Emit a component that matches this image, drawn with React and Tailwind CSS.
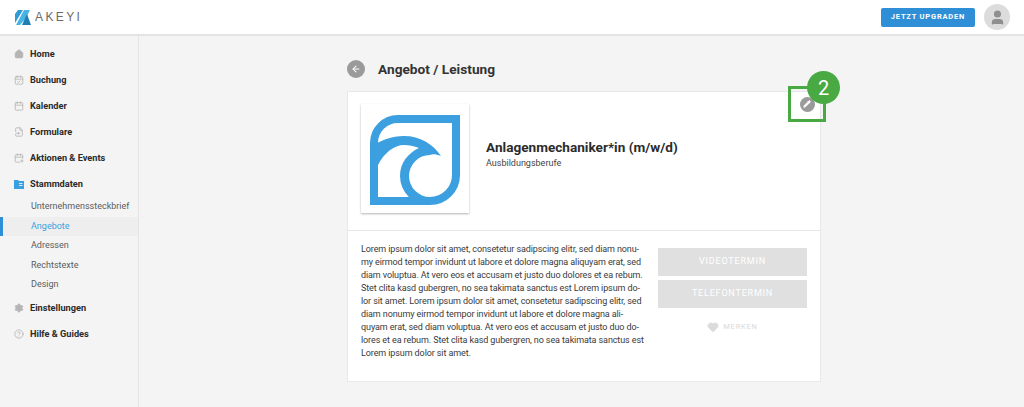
import { ArrowLeft, Pencil, Heart, Home, CalendarCheck, Calendar, FileSymlink, CalendarPlus, Settings, CircleHelp, User } from 'lucide-react';

const NAV_TOP = [
  { label: 'Home', icon: Home, filled: true },
  { label: 'Buchung', icon: CalendarCheck },
  { label: 'Kalender', icon: Calendar },
  { label: 'Formulare', icon: FileSymlink },
  { label: 'Aktionen & Events', icon: CalendarPlus },
];

const SUB_NAV = ['Unternehmenssteckbrief', 'Angebote', 'Adressen', 'Rechtstexte', 'Design'];

const LOREM = [
  'Lorem ipsum dolor sit amet, consetetur sadipscing elitr, sed diam nonu-',
  'my eirmod tempor invidunt ut labore et dolore magna aliquyam erat, sed',
  'diam voluptua. At vero eos et accusam et justo duo dolores et ea rebum.',
  'Stet clita kasd gubergren, no sea takimata sanctus est Lorem ipsum do-',
  'lor sit amet. Lorem ipsum dolor sit amet, consetetur sadipscing elitr, sed',
  'diam nonumy eirmod tempor invidunt ut labore et dolore magna ali-',
  'quyam erat, sed diam voluptua. At vero eos et accusam et justo duo do-',
  'lores et ea rebum. Stet clita kasd gubergren, no sea takimata sanctus est',
  'Lorem ipsum dolor sit amet.',
];

function NavItem({ label, icon: Icon, filled }) {
  return (
    <div className="flex items-center h-[26px] pl-[14px]">
      <Icon className={filled ? 'w-[10px] h-[10px] text-[#b5b5b5] fill-[#b5b5b5]' : 'w-[10px] h-[10px] text-[#b5b5b5]'} strokeWidth={2} />
      <span className="ml-[6px] text-[9.2px] font-bold text-[#2b2b2b]">{label}</span>
    </div>
  );
}

function FolderIcon() {
  return (
    <svg viewBox="0 0 10 9" className="w-[10px] h-[9px]">
      <path d="M0 0h4l1 1h5v8H0z" fill="#3b9fe0" />
      <path d="M5 3h3.5v1H5zM5 5h3.5v1H5z" fill="#d8ecfa" />
    </svg>
  );
}

function WaveLogo() {
  return (
    <svg viewBox="0 0 90 90" className="w-[90px] h-[90px]">
      <path d="M4 86V28A24 24 0 0 1 28 4H86V60A26 26 0 0 1 60 86Z" fill="none" stroke="#3b9fe0" strokeWidth="8" />
      <path
        d="M0 33C10 25 22 21 34 21C50 21 63 29 71 41C66 39 62 39 60 40A21 21 0 0 0 60 82L60 86L42 86L38 81A30 30 0 0 1 30 61C30 48 38 38 49 33C44 31 39 30 34 30C24 30 14 38 8 50L0 50Z"
        fill="#3b9fe0"
      />
    </svg>
  );
}

function AkeyiLogo() {
  return (
    <svg viewBox="0 0 16 15" className="w-[16px] h-[15px]">
      <path d="M3 0h5L0 13V4z" fill="#2f9bd6" />
      <path d="M9 0h6l-4 8-6 7H1z" fill="#49b3e3" />
      <path d="M12 4l4 11h-9z" fill="#1f7fb5" />
    </svg>
  );
}

export default function App() {
  return (
    <div className="h-[407px] flex flex-col overflow-hidden bg-[#f4f4f4] text-[#2b2b2b] font-['Roboto',sans-serif]">
      {/* Header */}
      <header className="h-[36px] shrink-0 bg-white border-b-2 border-[#e3e3e3] flex items-center justify-between pl-[15px] pr-[14px]">
        <div className="flex items-center gap-[4px]">
          <AkeyiLogo />
          <span className="text-[12px] tracking-[2.4px] text-[#6b6b6b] font-['Liberation_Sans',sans-serif]">AKEYI</span>
        </div>
        <div className="flex items-center gap-[9px]">
          <div className="w-[94px] h-[19px] bg-[#2f8fd6] rounded-[2px] flex items-center justify-center text-[7.5px] font-bold tracking-[0.8px] text-white">
            JETZT UPGRADEN
          </div>
          <div className="w-[26px] h-[26px] rounded-full bg-[#dcdcdc] flex items-center justify-center">
            <User className="w-[17px] h-[17px] text-[#8f8f8f] fill-[#8f8f8f]" />
          </div>
        </div>
      </header>

      <div className="flex flex-1">
        {/* Sidebar */}
        <aside className="w-[139px] shrink-0 border-r border-[#e5e5e5] pt-[5px]">
          {NAV_TOP.map((item) => (
            <NavItem key={item.label} label={item.label} icon={item.icon} filled={item.filled} />
          ))}
          <div className="flex items-center h-[26px] pl-[14px]">
            <FolderIcon />
            <span className="ml-[6px] text-[9.2px] font-bold">Stammdaten</span>
          </div>
          <div>
            {SUB_NAV.map((label) =>
              label === 'Angebote' ? (
                <div key={label} className="h-[19.5px] flex items-center pl-[28px] bg-[#eeeeee] border-l-[3px] border-[#2f8fd6] text-[9px] text-[#3b9fe0]">
                  {label}
                </div>
              ) : (
                <div key={label} className="h-[19.5px] flex items-center pl-[31px] text-[9px] text-[#5c5c5c]">
                  {label}
                </div>
              )
            )}
          </div>
          <NavItem label="Einstellungen" icon={Settings} filled />
          <NavItem label="Hilfe & Guides" icon={CircleHelp} />
        </aside>

        {/* Main Content */}
        <main className="flex-1 pl-[208px] pt-[24px]">
          <div className="flex items-center h-[18px]">
            <div className="w-[18px] h-[18px] rounded-full bg-[#9a9a9a] flex items-center justify-center">
              <ArrowLeft className="w-[10px] h-[10px] text-white" strokeWidth={2.5} />
            </div>
            <h1 className="ml-[13px] text-[13.7px] font-bold text-[#333333]">Angebot / Leistung</h1>
          </div>

          <div className="relative mt-[13px] w-[474px] h-[291px] bg-white border border-[#e8e8e8]">
            {/* Edit button highlight */}
            <div className="absolute left-[440px] top-[-6px] w-[38px] h-[36px] border-[3px] border-[#49a942] flex items-center justify-center">
              <div className="w-[15px] h-[15px] rounded-full bg-[#9a9a9a] flex items-center justify-center">
                <Pencil className="w-[8px] h-[8px] text-white fill-white" />
              </div>
            </div>
            <div className="absolute left-[459px] top-[-21px] w-[33px] h-[33px] rounded-full bg-[#49a942] flex items-center justify-center text-[20px] text-white">
              2
            </div>

            <div className="flex items-start h-[139px] border-b border-[#e8e8e8] pl-[13px] pt-[12px]">
              <div className="w-[108px] h-[109px] pb-[8px] bg-white shadow-[0_1px_2px_rgba(0,0,0,0.3)] flex items-end justify-center">
                <WaveLogo />
              </div>
              <div className="ml-[17px] mt-[34px]">
                <h2 className="text-[13.6px] font-bold leading-[18px] text-[#2b2b2b]">Anlagenmechaniker*in (m/w/d)</h2>
                <p className="text-[9px] leading-[15px] text-[#444444]">Ausbildungsberufe</p>
              </div>
            </div>

            <div className="flex pl-[13px] pt-[12px]">
              <div className="w-[297px] text-[9px] tracking-[-0.1px] leading-[13px] text-[#3a3a3a] whitespace-nowrap">
                {LOREM.map((line) => (
                  <div key={line}>{line}</div>
                ))}
              </div>
              <div className="w-[149px] pt-[5px] flex flex-col gap-[4px]">
                <div className="h-[28px] bg-[#e0e0e0] flex items-center justify-center text-[9px] tracking-[0.8px] text-white">VIDEOTERMIN</div>
                <div className="h-[28px] bg-[#e0e0e0] flex items-center justify-center text-[9px] tracking-[0.8px] text-white">TELEFONTERMIN</div>
                <div className="h-[30px] flex items-center justify-center gap-[4px] text-[7.5px] tracking-[0.8px] text-[#d8d8d8]">
                  <Heart className="w-[12px] h-[12px] text-[#dcdcdc] fill-[#dcdcdc]" />
                  MERKEN
                </div>
              </div>
            </div>
          </div>
        </main>
      </div>
    </div>
  );
}
